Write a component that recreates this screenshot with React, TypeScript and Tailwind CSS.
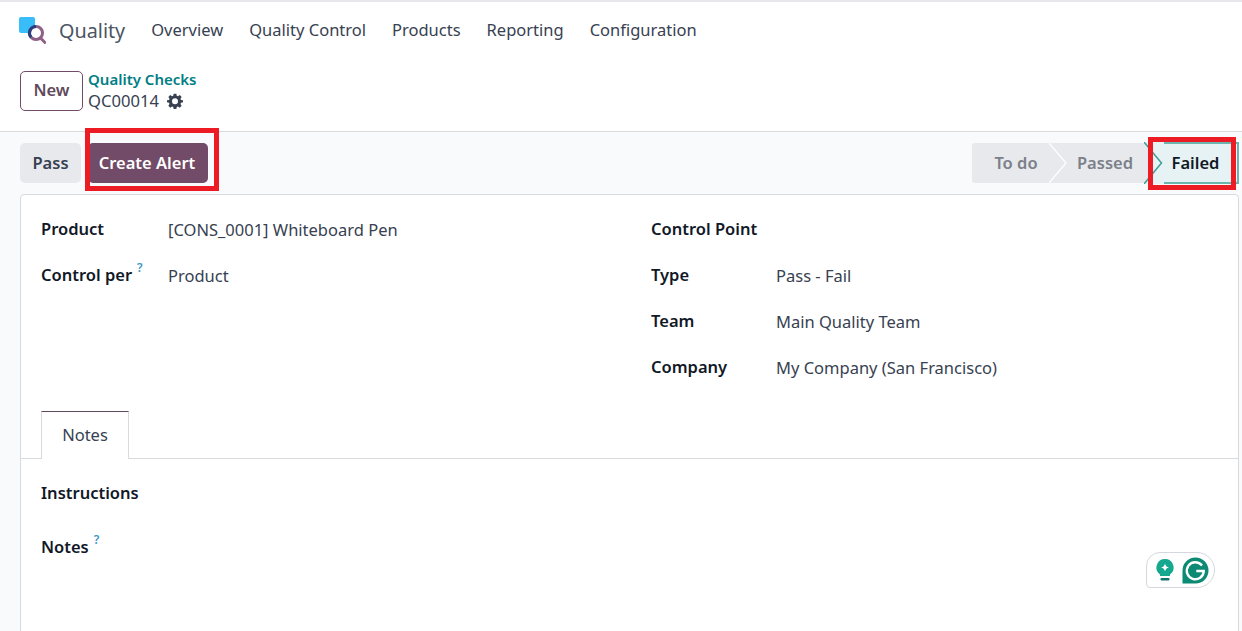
const navItems = ["Overview", "Quality Control", "Products", "Reporting", "Configuration"];

function Logo() {
    return (
        <svg width="28" height="30" viewBox="0 0 28 30" className="mt-px shrink-0">
            <rect x="1" y="1" width="16" height="16" rx="2" fill="#38bdf8" />
            <circle cx="18" cy="17" r="6.5" fill="#fff" stroke="#8f5f86" strokeWidth="3" />
            <path d="M18 10.500a6.500 6.500 0 0 0-5 10.700" fill="none" stroke="#27407f" strokeWidth="3" />
            <path d="M22.500 22l4.500 4.500" stroke="#8f5f86" strokeWidth="3" strokeLinecap="round" />
        </svg>
    );
}

function Gear() {
    return (
        <svg width="16" height="16" viewBox="0 0 24 24" fill="#374151">
            <path
                fillRule="evenodd"
                d="M10 1h4l.6 3.100 1.900.8L19.200 3.100 22 5.900l-1.800 2.700.8 1.900L24 11v3l-3 .6-.8 1.900 1.800 2.700-2.800 2.800-2.700-1.800-1.900.8L14 24h-4l-.6-3-1.900-.8-2.700 1.800L2 19.200l1.800-2.700-.8-1.900L0 14v-3l3-.5.8-1.900L2 5.900l2.800-2.800 2.700 1.800 1.900-.8zM12 8a4.500 4.500 0 1 0 0 9 4.500 4.500 0 0 0 0-9z"
            />
        </svg>
    );
}

function Help() {
    return <sup className="top-[-0.75em] ml-[5px] text-[12px] font-semibold text-[#3b97c4]">?</sup>;
}

function Field({ label, value, help, labelClass }: { label: string; value?: string; help?: boolean; labelClass: string }) {
    return (
        <div className="flex h-[46px] items-start">
            <div className={`${labelClass} text-[16.5px] font-semibold leading-[24px] text-[#111827]`}>
                {label}
                {help && <Help />}
            </div>
            {value && <div className="text-[16.5px] leading-[26px] text-[#374151]">{value}</div>}
        </div>
    );
}

export default function App() {
    return (
        <div className="relative h-[631px] w-[1242px] overflow-hidden bg-[#f9fafb] font-['Noto_Sans','Open_Sans',sans-serif]">
            <div className="border-t-2 border-[#e5e7eb] bg-white">
                <nav className="flex h-[44px] items-center pl-[18px] pt-[12px]">
                    <Logo />
                    <span className="ml-[13px] mr-[26px] mt-px text-[19.800px] text-[#4b5563]">Quality</span>
                    <div className="flex gap-[26px]">
                        {navItems.map((item) => (
                            <span key={item} className="text-[16.500px] text-[#374151]">{item}</span>
                        ))}
                    </div>
                </nav>
                <div className="flex h-[86px] items-start border-b border-[#d8dadd] pl-[20px] pt-[25px]">
                    <button type="button" className="h-[40px] w-[63px] rounded-[5px] border border-[#714b67] pb-[2px] text-[16.500px] font-semibold text-[#5f4a5c]">
                        New
                    </button>
                    <div className="ml-[5px] -mt-[3px] flex flex-col">
                        <span className="text-[15px] font-semibold leading-[22px] text-[#017e84]">Quality Checks</span>
                        <div className="flex items-center gap-[8px]">
                            <span className="text-[16.600px] leading-[21px] text-[#374151]">QC00014</span>
                            <Gear />
                        </div>
                    </div>
                </div>
            </div>

            <div className="flex h-[62px] items-center justify-between pl-[20px] pr-[3px]">
                <div className="flex gap-[7px]">
                    <button type="button" className="h-[40px] w-[61px] rounded-[5px] bg-[#e7e9ed] text-[16.500px] font-semibold text-[#374151]">
                        Pass
                    </button>
                    <button type="button" className="h-[40px] w-[120px] rounded-[5px] bg-[#714b67] pr-[2px] text-[16.500px] font-semibold text-white">
                        Create Alert
                    </button>
                </div>
                <div className="flex h-[42px] items-center text-[16.500px] font-semibold">
                    <div className="flex h-[40px] w-[78px] items-center justify-center rounded-l-[3px] bg-[#e7e9ed] pl-[10px] text-[#7b8089]">To do</div>
                    <div className="relative flex h-[40px] w-[94px] items-center justify-center bg-[#e7e9ed] pl-[16px] text-[#7b8089]">
                        Passed
                        <svg width="18" height="40" viewBox="0 0 18 40" className="absolute -left-px top-0">
                            <path d="M0 0l17 20L0 40" fill="#e7e9ed" stroke="#fff" strokeWidth="1.200" />
                        </svg>
                    </div>
                    <div className="relative flex h-[42px] w-[95px] items-center justify-center border-y-2 border-r-2 border-[#6cb4ae] bg-[#e6f2f3] pl-[10px] text-[#111827]">
                        Failed
                        <svg width="20" height="42" viewBox="0 0 20 42" className="absolute left-0 -top-[2px]">
                            <path d="M0 0h20v42H0z" fill="#e6f2f3" />
                            <path d="M0 1l6 7v26l-6 7z" fill="#e7e9ed" />
                            <path d="M0 0l17.500 21L0 42" fill="none" stroke="#3e9e98" strokeWidth="1.500" />
                        </svg>
                    </div>
                </div>
            </div>

            <main className="ml-[20px] w-[1219px] rounded-t-[4px] border border-[#d8dadd] bg-white pb-[100px]">
                <div className="flex pt-[22px] pl-[20px]">
                    <div className="w-[610px]">
                        <Field label="Product" value="[CONS_0001] Whiteboard Pen" labelClass="w-[127px]" />
                        <Field label="Control per" value="Product" help labelClass="w-[127px]" />
                    </div>
                    <div>
                        <Field label="Control Point" labelClass="w-[125px]" />
                        <Field label="Type" value="Pass - Fail" labelClass="w-[125px]" />
                        <Field label="Team" value="Main Quality Team" labelClass="w-[125px]" />
                        <Field label="Company" value="My Company (San Francisco)" labelClass="w-[125px]" />
                    </div>
                </div>
                <div className="mt-[10px] flex h-[48px] items-end border-b border-[#d8dadd] pl-[20px]">
                    <div className="-mb-px flex h-[48px] w-[88px] items-center justify-center border-x border-t border-[#d8dadd] border-t-[#5f4a5c] bg-white text-[16.500px] text-[#374151]">
                        Notes
                    </div>
                </div>
                <div className="pl-[20px] pt-[22px]">
                    <div className="text-[16.500px] font-semibold leading-[24px] text-[#111827]">Instructions</div>
                    <div className="mt-[30px] text-[16.500px] font-semibold leading-[24px] text-[#111827]">
                        Notes
                        <Help />
                    </div>
                </div>
            </main>

            {/* red highlight boxes + grammarly widget sit over the page */}
            <div className="absolute left-[85px] top-[128px] h-[63px] w-[134px] border-[5px] border-[#ed1c24]" />
            <div className="absolute left-[1148px] top-[137px] h-[53px] w-[88px] border-[5px] border-[#ed1c24]" />

            <div className="absolute left-[1146px] top-[552px] flex h-[36px] w-[69px] items-center gap-[6px] rounded-tl-[14px] rounded-tr-[18px] rounded-br-[18px] rounded-bl-[4px] border border-[#d5d9dd] bg-white pl-[8px]">
                <svg width="20" height="24" viewBox="0 0 20 24">
                    <path d="M10 1a8.500 8.500 0 0 0-5 15.400V18h10v-1.600A8.500 8.500 0 0 0 10 1z" fill="#15a88f" />
                    <path d="M10 5.500c.5 2.500 1.500 3.500 4 4-2.500.5-3.500 1.500-4 4-.5-2.500-1.500-3.500-4-4 2.500-.5 3.500-1.500 4-4z" fill="#fff" />
                    <rect x="5.500" y="20" width="9" height="2.500" rx="1" fill="#0f766e" />
                </svg>
                <svg width="29" height="27" viewBox="0 0 29 27">
                    <path d="M14.500 0.500a13 13 0 0 1 0 26H1.500V14a13 13 0 0 1 13-13.500z" fill="#0d8a74" />
                    <path d="M21 8.500A8.500 8.500 0 1 0 22.800 14h-7.500" fill="none" stroke="#fff" strokeWidth="2.400" />
                </svg>
            </div>
        </div>
    );
}
